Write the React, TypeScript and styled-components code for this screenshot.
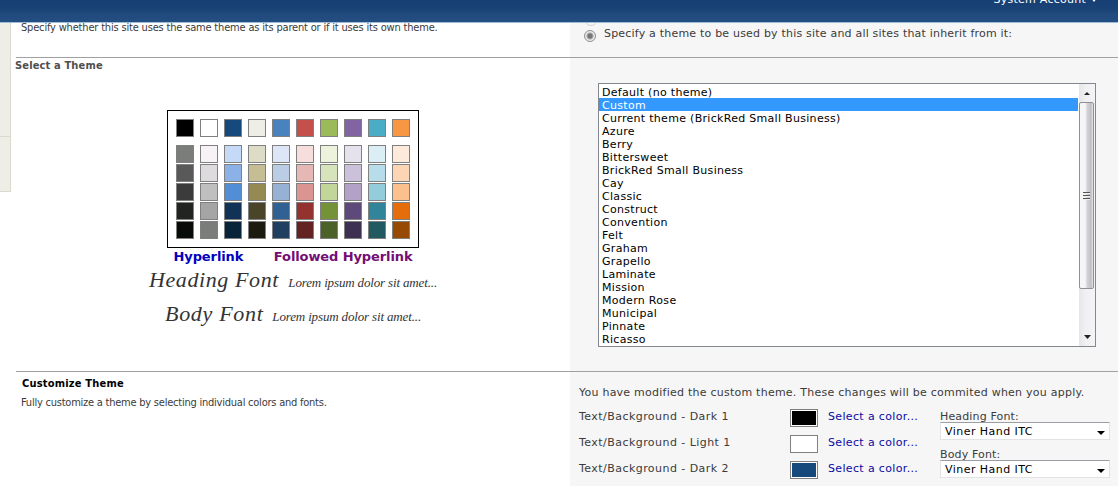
import React from "react";
import styled, { createGlobalStyle } from "styled-components";

const GlobalStyle = createGlobalStyle`
  * { box-sizing: border-box; }
  html, body { margin: 0; padding: 0; background: #fff; overflow: hidden; }
  body { font-family: "DejaVu Sans", Verdana, sans-serif; font-size: 11px; line-height: 13px; color: #3b3b3b; }
`;

const Page = styled.div`
  width: 1118px;
  height: 486px;
  overflow: hidden;
  display: flex;
  flex-direction: column;
`;

const Ribbon = styled.header`
  flex: none;
  height: 23px;
  background: linear-gradient(#173f73 0%, #1a4377 45%, #21497c 60%, #234f82 100%);
  border-bottom: 1px solid #9dbbd6;
  display: flex;
  justify-content: flex-end;
  align-items: flex-start;
  padding-right: 21px;
  overflow: hidden;
`;

const Account = styled.div`
  display: flex;
  align-items: center;
  gap: 5px;
  margin-top: -8px;
  height: 15px;
  color: #fff;
  letter-spacing: 0.25px;
`;

const Body = styled.div`
  flex: 1;
  display: flex;
  min-height: 0;
`;

const Nav = styled.nav`
  width: 11px;
  height: 169px;
  flex: none;
  background: #eeeee6;
  border-right: 1px solid #dadacf;
  border-bottom: 1px solid #dadacf;
`;

const NavGroup = styled.div`
  height: 114px;
  border-bottom: 1px solid #dadacf;
`;

const Main = styled.main`
  flex: 1;
  display: flex;
  flex-direction: column;
  padding-left: 5px;
`;

const Section = styled.section<{ $height: number; $line?: boolean }>`
  height: ${(p) => p.$height}px;
  flex: none;
  display: flex;
  background: linear-gradient(#a0a0a0, #a0a0a0) top / 100% ${(p) => (p.$line ? 1 : 0)}px no-repeat,
    linear-gradient(to right, #fff 554px, #f6f6f6 554px);
`;

const Info = styled.div<{ $top: number }>`
  width: 554px;
  flex: none;
  padding-top: ${(p) => p.$top}px;
`;

const Controls = styled.div<{ $top: number; $left: number }>`
  flex: 1;
  padding: ${(p) => p.$top}px 0 0 ${(p) => p.$left}px;
`;

const Title = styled.h3<{ $color: string; $indent: number; $spacing: number }>`
  margin: 0 0 0 ${(p) => p.$indent}px;
  font: bold 11px/13px "DejaVu Sans Condensed", "DejaVu Sans", Tahoma, sans-serif;
  font-stretch: condensed;
  letter-spacing: ${(p) => p.$spacing}px;
  color: ${(p) => p.$color};
`;

const Description = styled.p<{ $top: number; $spacing: number }>`
  margin: ${(p) => p.$top}px 0 0 5px;
  font: 11px/13px "DejaVu Sans Condensed", "DejaVu Sans", Tahoma, sans-serif;
  font-stretch: condensed;
  letter-spacing: ${(p) => p.$spacing}px;
  white-space: nowrap;
`;

const Label = styled.span<{ $spacing?: number }>`
  white-space: nowrap;
  letter-spacing: ${(p) => p.$spacing ?? 0.1}px;
`;

const RadioRow = styled.div`
  display: flex;
  align-items: flex-start;
  gap: 8px;
  height: 13px;
`;

const RadioStub = styled.div`
  width: 12px;
  height: 3px;
  margin-bottom: 1px;
  overflow: hidden;
  display: flex;
  align-items: flex-end;
  &::after {
    content: "";
    flex: none;
    width: 12px;
    height: 12px;
    border: 1px solid #d2d2d2;
    border-radius: 50%;
  }
`;

const Radio = styled.span`
  width: 12px;
  height: 12px;
  margin-top: 3px;
  border: 1px solid #8e8e8e;
  border-radius: 50%;
  background: radial-gradient(circle, #777 0 2px, #a5a5a5 3px, #ececec 4px);
`;

const Preview = styled.div`
  display: flex;
  flex-direction: column;
  align-items: center;
  padding: 38px 0 0 0;
  width: 554px;
`;

const Palette = styled.div`
  width: 252px;
  height: 138px;
  border: 1px solid #000;
  background: #fff;
  padding: 8px;
  display: flex;
  flex-direction: column;
  gap: 1px;
`;

const SwatchRow = styled.div`
  display: flex;
  gap: 6px;
  &:first-child { margin-bottom: 7px; }
`;

const Swatch = styled.span<{ $color: string }>`
  width: 18px;
  height: 18px;
  border: 1px solid #808080;
  background: ${(p) => p.$color};
`;

const LinkSamples = styled.div`
  display: flex;
  justify-content: space-between;
  width: 239px;
  height: 17px;
  font: bold 13px/17px "DejaVu Sans", Verdana, sans-serif;
`;

const Sample = styled.span<{ $color: string; $spacing: number }>`
  color: ${(p) => p.$color};
  letter-spacing: ${(p) => p.$spacing}px;
  white-space: nowrap;
`;

const FontSample = styled.div<{ $width: number; $height: number }>`
  display: flex;
  align-items: baseline;
  justify-content: space-between;
  width: ${(p) => p.$width}px;
  height: ${(p) => p.$height}px;
  color: #333;
  font-family: "Viner Hand ITC", "Liberation Serif", serif;
  font-style: italic;
  white-space: nowrap;
`;

const Large = styled.span<{ $spacing: number }>`
  font-size: 22px;
  line-height: 30px;
  letter-spacing: ${(p) => p.$spacing}px;
`;

const Small = styled.span`
  font-size: 13px;
  letter-spacing: -0.15px;
`;

const ListBox = styled.div`
  width: 498px;
  height: 264px;
  border: 1px solid #828790;
  background: #fff;
  color: #000;
  display: flex;
`;

const Options = styled.ul`
  flex: 1;
  margin: 0;
  padding: 1px 1px 0 0;
  list-style: none;
`;

const Option = styled.li<{ $selected: boolean }>`
  height: 13px;
  padding-left: 3px;
  line-height: 15px;
  white-space: nowrap;
  letter-spacing: 0.3px;
  background: ${(p) => (p.$selected ? "#3399ff" : "transparent")};
  color: ${(p) => (p.$selected ? "#fff" : "#000")};
`;

const Scrollbar = styled.div`
  width: 16px;
  background: linear-gradient(to right, #e6e6e8, #f0eff1 40%, #f4f3f5);
  display: flex;
  flex-direction: column;
  align-items: flex-start;
`;

const ScrollButton = styled.div`
  height: 18px;
  padding-left: 5px;
  display: flex;
  align-items: center;
`;

const Thumb = styled.div`
  width: 15px;
  height: 187px;
  border: 1px solid #8f8f94;
  border-radius: 2px;
  background: linear-gradient(to right, #f5f4f6 0 40%, #d3d3d7 55%, #bfbfc5 85%, #e8e8ea);
  display: flex;
  justify-content: center;
  align-items: center;
`;

const Theme = styled.div`
  display: flex;
  margin-top: 11px;
`;

const ColorList = styled.div`
  width: 361px;
  display: flex;
  flex-direction: column;
  gap: 7px;
`;

const ColorRow = styled.div`
  display: flex;
  align-items: flex-start;
  height: 19px;
`;

const ColorName = styled.div`
  width: 211px;
  letter-spacing: 0.45px;
`;

const ColorBox = styled.div<{ $color: string }>`
  width: 28px;
  height: 18px;
  margin: -1px 10px 0 0;
  border: 1px solid #808080;
  background: #fff;
  padding: 1px;
  &::after {
    content: "";
    display: block;
    height: 14px;
    background: ${(p) => p.$color};
  }
`;

const Link = styled.a`
  color: #0a0aa5;
  letter-spacing: 0.35px;
`;

const Fonts = styled.div`
  display: flex;
  flex-direction: column;
  gap: 7px;
`;

const Field = styled.div`
  height: 31px;
  letter-spacing: 0.15px;
`;

const Select = styled.div`
  width: 170px;
  height: 18px;
  margin-top: -1px;
  border: 1px solid #e1e3e6;
  border-top-color: #9c9ea3;
  background: #fff;
  color: #000;
  letter-spacing: 0.45px;
  padding: 0 4px;
  display: flex;
  align-items: center;
  justify-content: space-between;
  svg { margin-top: 4px; }
`;

const ramps = [
  ["#000000", "#ffffff", "#174a7c", "#eeeee6", "#4a82bd", "#c4504c", "#9bba5a", "#8364a3", "#4aacc5", "#f79643"],
  ["#7b7d7b", "#f6f2f6", "#c5daf6", "#dddcc6", "#dce6f6", "#f5dedc", "#edf2dd", "#e5e1ed", "#dceef5", "#fdeadb"],
  ["#595959", "#dddbdd", "#8cb1e6", "#c5be94", "#bacde4", "#e5b8b6", "#d6e3bb", "#ccc1da", "#b6dde9", "#fcd5b4"],
  ["#3a3b3a", "#bfbfbf", "#528ed6", "#948a52", "#95b2d5", "#da9592", "#c3d69a", "#b3a1c7", "#93cddc", "#fbc08d"],
  ["#222422", "#a5a5a5", "#103256", "#4a4429", "#316092", "#93322f", "#749238", "#5d497a", "#31859a", "#e56d0b"],
  ["#080c08", "#7b7d7b", "#082439", "#1b1b10", "#213f60", "#622322", "#4c6128", "#3d3050", "#215a60", "#964a04"],
];

const themes = [
  "Default (no theme)", "Custom", "Current theme (BrickRed Small Business)", "Azure", "Berry",
  "Bittersweet", "BrickRed Small Business", "Cay", "Classic", "Construct", "Convention", "Felt",
  "Graham", "Grapello", "Laminate", "Mission", "Modern Rose", "Municipal", "Pinnate", "Ricasso",
];

const themeColors = [
  ["Text/Background - Dark 1", "#000"],
  ["Text/Background - Light 1", "#fff"],
  ["Text/Background - Dark 2", "#174a7c"],
];

const Arrow = ({ up, width, height, color = "#222" }: { up?: boolean; width: number; height: number; color?: string }) => (
  <svg width={width} height={height} viewBox="0 0 8 4" preserveAspectRatio="none">
    <path d={up ? "M0 4L4 0L8 4Z" : "M0 0L4 4L8 0Z"} fill={color} />
  </svg>
);

export default function App() {
  return (
    <Page>
      <GlobalStyle />
      <Ribbon>
        <Account>
          System Account
          <Arrow width={6} height={4} color="#fff" />
        </Account>
      </Ribbon>
      <Body>
        <Nav>
          <NavGroup />
        </Nav>
        <Main>
          <Section $height={34}>
            <Info $top={0}>
              <Description $top={-2} $spacing={-0.18}>
                Specify whether this site uses the same theme as its parent or if it uses its own theme.
              </Description>
            </Info>
            <Controls $top={0} $left={14}>
              <RadioStub />
              <RadioRow>
                <Radio />
                <Label $spacing={0.2}>Specify a theme to be used by this site and all sites that inherit from it:</Label>
              </RadioRow>
            </Controls>
          </Section>
          <Section $height={314} $line>
            <Info $top={2}>
              <Title $color="#4f4f4f" $indent={-1} $spacing={0.15}>Select a Theme</Title>
              <Preview>
                <Palette>
                  {ramps.map((row, i) => (
                    <SwatchRow key={i}>
                      {row.map((c, j) => <Swatch key={j} $color={c} />)}
                    </SwatchRow>
                  ))}
                </Palette>
                <LinkSamples>
                  <Sample $color="#0000c0" $spacing={-0.1}>Hyperlink</Sample>
                  <Sample $color="#750d75" $spacing={-0.1}>Followed Hyperlink</Sample>
                </LinkSamples>
                <FontSample $width={288} $height={34}>
                  <Large $spacing={0.6}>Heading Font</Large>
                  <Small>Lorem ipsum dolor sit amet...</Small>
                </FontSample>
                <FontSample $width={256} $height={34}>
                  <Large $spacing={0.7}>Body Font</Large>
                  <Small>Lorem ipsum dolor sit amet...</Small>
                </FontSample>
              </Preview>
            </Info>
            <Controls $top={26} $left={28}>
              <ListBox>
                <Options>
                  {themes.map((t) => <Option key={t} $selected={t === "Custom"}>{t}</Option>)}
                </Options>
                <Scrollbar>
                  <ScrollButton><Arrow up width={6} height={3} /></ScrollButton>
                  <Thumb>
                    <svg width="7" height="8" viewBox="0 0 7 8" shapeRendering="crispEdges">
                      <path d="M0 .5H7M0 3.5H7M0 6.5H7" stroke="#555" />
                      <path d="M0 1.5H7M0 4.5H7M0 7.5H7" stroke="#eee" />
                    </svg>
                  </Thumb>
                  <ScrollButton style={{ marginTop: "auto" }}><Arrow width={7} height={4} /></ScrollButton>
                </Scrollbar>
              </ListBox>
            </Controls>
          </Section>
          <Section $height={115} $line>
            <Info $top={6}>
              <Title $color="#000" $indent={6} $spacing={0.2}>Customize Theme</Title>
              <Description $top={6} $spacing={-0.23}>
                Fully customize a theme by selecting individual colors and fonts.
              </Description>
            </Info>
            <Controls $top={15} $left={9}>
              <Label $spacing={0.24}>You have modified the custom theme. These changes will be commited when you apply.</Label>
              <Theme>
                <ColorList>
                  {themeColors.map(([name, color]) => (
                    <ColorRow key={name}>
                      <ColorName>{name}</ColorName>
                      <ColorBox $color={color} />
                      <Link>Select a color...</Link>
                    </ColorRow>
                  ))}
                </ColorList>
                <Fonts>
                  <Field>
                    Heading Font:
                    <Select>Viner Hand ITC<Arrow width={8} height={4} color="#000" /></Select>
                  </Field>
                  <Field>
                    Body Font:
                    <Select>Viner Hand ITC<Arrow width={8} height={4} color="#000" /></Select>
                  </Field>
                </Fonts>
              </Theme>
            </Controls>
          </Section>
        </Main>
      </Body>
    </Page>
  );
}
